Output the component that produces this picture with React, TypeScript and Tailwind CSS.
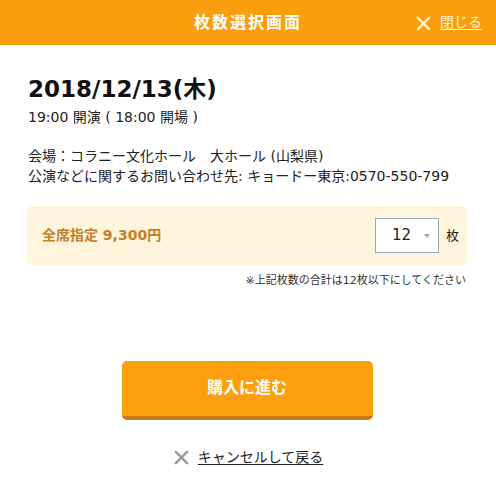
export default function App() {
  const font = { fontFamily: '"DejaVu Sans", "Noto Sans CJK JP", sans-serif' };
  return (
    <div className="w-[496px] h-[496px] bg-white text-[#222]" style={font}>
      <header className="relative h-[45px] bg-[#fa9e0d] flex items-center justify-center">
        <h1 className="text-white font-bold text-[16px] tracking-[2px]">枚数選択画面</h1>
        <a className="absolute right-[14px] top-0 h-full flex items-center gap-[8px] text-[#fff4d6] text-[14px]">
          <svg width="17" height="17" viewBox="0 0 16 16" className="mt-[1px]">
            <path d="M2 2L14 14M14 2L2 14" stroke="#fff4d6" strokeWidth="2.2" />
          </svg>
          <span className="underline underline-offset-2">閉じる</span>
        </a>
      </header>

      <main className="pl-[28px] pt-[30px]">
        <div className="text-[23px] font-bold leading-[28px] text-[#111]">2018/12/13(木)</div>
        <div className="text-[14px] leading-[20px] mt-[4px]">19:00 開演 ( 18:00 開場 )</div>
        <div className="text-[14px] leading-[20px] mt-[19px]">
          <p>会場：コラニー文化ホール　大ホール (山梨県)</p>
          <p>公演などに関するお問い合わせ先: キョードー東京:0570-550-799</p>
        </div>
      </main>

      <section className="ml-[27px] mr-[29px] mt-[20px] h-[59px] rounded-[5px] bg-[#fff5dd] flex items-center pl-[15px] pr-[8px]">
        <span className="flex-1 text-[14px] font-bold text-[#c47f2b]">全席指定 9,300円</span>
        <div className="w-[64px] h-[35px] bg-white border border-[#97a9b8] flex items-center pl-[16px] pr-[8px]">
          <span className="flex-1 text-[15px] text-[#222]">12</span>
          <svg width="6" height="4" viewBox="0 0 6 4"><path d="M0 0H6L3 4Z" fill="#aaa" /></svg>
        </div>
        <span className="ml-[7px] text-[13px]">枚</span>
      </section>
      <p className="mr-[30px] mt-[8px] text-right text-[11px] text-[#333]">※上記枚数の合計は12枚以下にしてください</p>

      <div className="flex justify-center mt-[71px]">
        <button className="ml-[-2px] w-[251px] h-[59px] rounded-[5px] bg-[#fb9f0e] border-b-[4px] border-[#c47d11] text-white font-bold text-[16px]">
          購入に進む
        </button>
      </div>

      <div className="flex justify-center items-center gap-[8px] mt-[27px] text-[14px]">
        <svg width="17" height="17" viewBox="0 0 16 16">
          <path d="M2 2L14 14M14 2L2 14" stroke="#999" strokeWidth="2.2" />
        </svg>
        <span className="underline underline-offset-2">キャンセルして戻る</span>
      </div>
    </div>
  );
}
